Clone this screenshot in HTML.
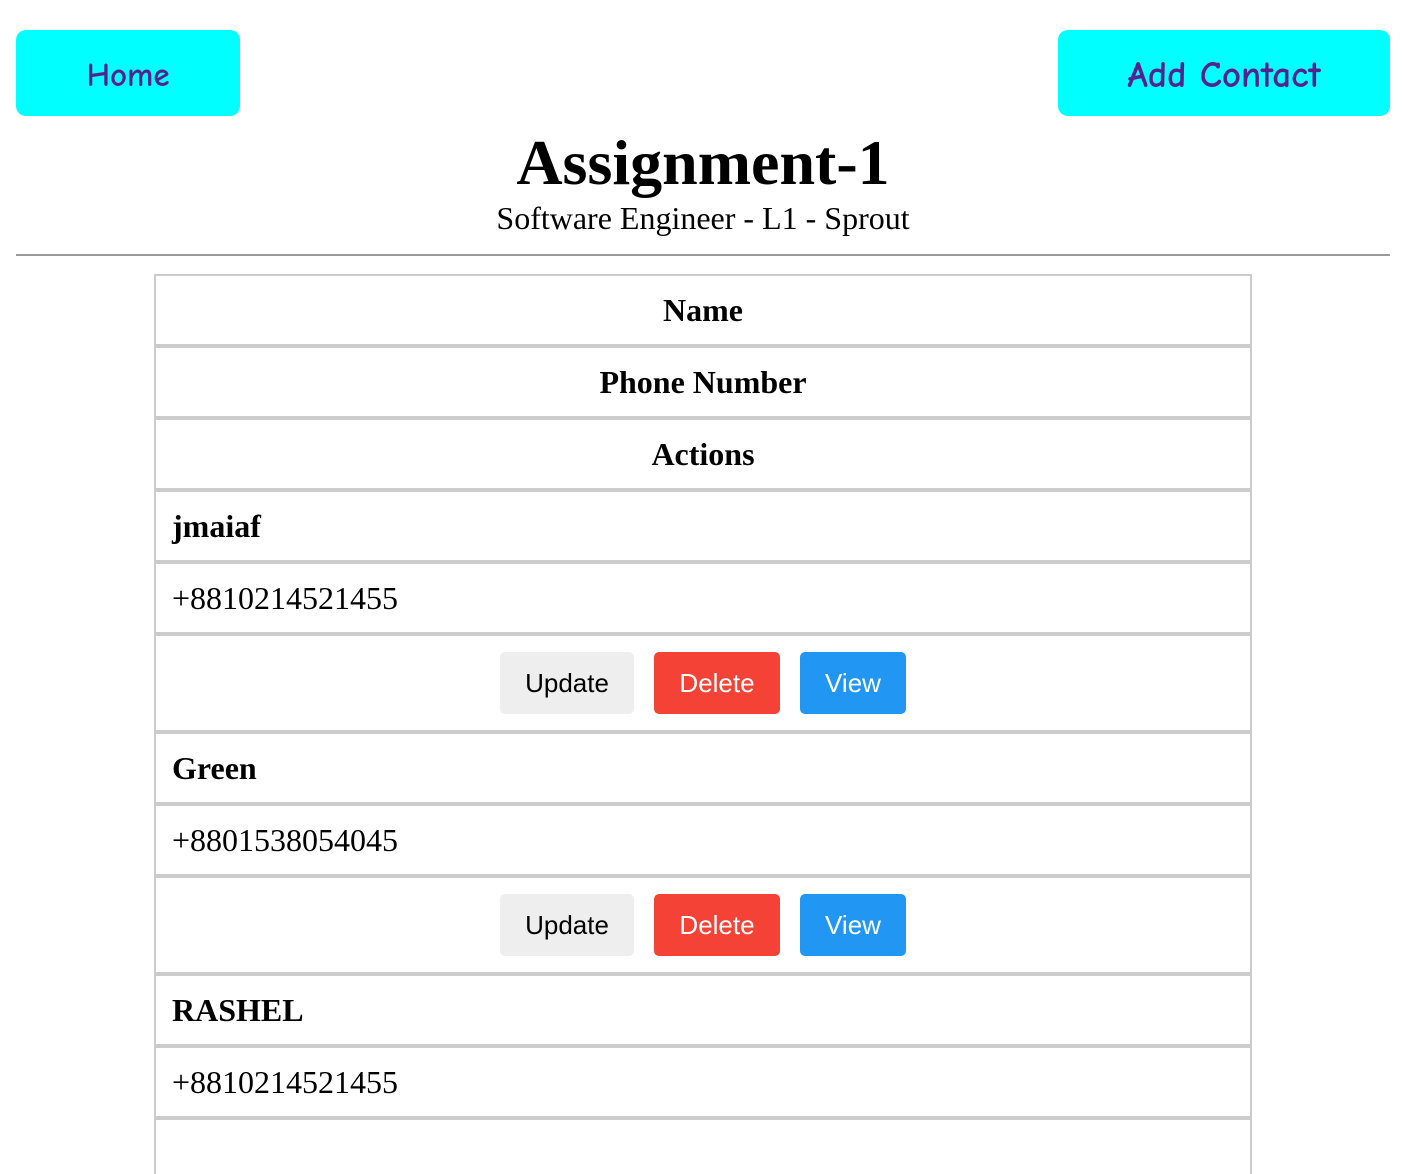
<!DOCTYPE html>
<html><head><meta charset="utf-8"><style>
*{margin:0;padding:0;box-sizing:border-box}
body{width:1406px;height:1108px;overflow:hidden;background:#fff;position:relative;font-family:"Liberation Serif",serif;color:#000}
.nb{position:absolute;background:#00ffff;border-radius:10px;color:#55208f;font-family:"Comic Sans MS","Comic Neue","DejaVu Sans",sans-serif;font-weight:bold;display:flex;align-items:center;justify-content:center}
h1{position:absolute;left:0;width:1406px;top:126px;text-align:center;font-size:64px;font-weight:bold;line-height:74px}
.sub{position:absolute;left:0;width:1406px;top:199px;text-align:center;font-size:32px;line-height:38px}
.hr{position:absolute;left:16px;width:1374px;top:254px;height:2px;background:#9a9a9a}
.tb{position:absolute;left:154px;top:274px;width:1098px;height:900px;border:2px solid #ccc;border-bottom:none}
.r{height:72px;border-bottom:4px solid #ccc;display:flex;align-items:center;font-size:32px;padding-left:16px}
.h{justify-content:center;font-weight:bold;padding-left:0}
.b{font-weight:bold}
.a{height:98px;justify-content:center;padding-left:0;gap:20px;font-family:"Liberation Sans",Arial,sans-serif}
.btn{height:62px;border-radius:5px;font-size:26px;display:flex;align-items:center;justify-content:center}
</style></head><body>
<div class="nb" style="left:16px;top:30px;width:224px;height:86px;font-size:33px;padding-top:6px">Home</div>
<div class="nb" style="left:1058px;top:30px;width:332px;height:86px;font-size:37px;padding-top:6px">Add Contact</div>
<h1>Assignment-1</h1>
<div class="sub">Software Engineer - L1 - Sprout</div>
<div class="hr"></div>
<div class="tb">
<div class="r h">Name</div>
<div class="r h">Phone Number</div>
<div class="r h">Actions</div>
<div class="r b">jmaiaf</div>
<div class="r">+8810214521455</div>
<div class="r a"><div class="btn" style="width:134px;background:#eee">Update</div><div class="btn" style="width:126px;background:#f44336;color:#fff">Delete</div><div class="btn" style="width:106px;background:#2196f3;color:#fff">View</div></div>
<div class="r b">Green</div>
<div class="r">+8801538054045</div>
<div class="r a"><div class="btn" style="width:134px;background:#eee">Update</div><div class="btn" style="width:126px;background:#f44336;color:#fff">Delete</div><div class="btn" style="width:106px;background:#2196f3;color:#fff">View</div></div>
<div class="r b">RASHEL</div>
<div class="r">+8810214521455</div>
</div>
</body></html>
